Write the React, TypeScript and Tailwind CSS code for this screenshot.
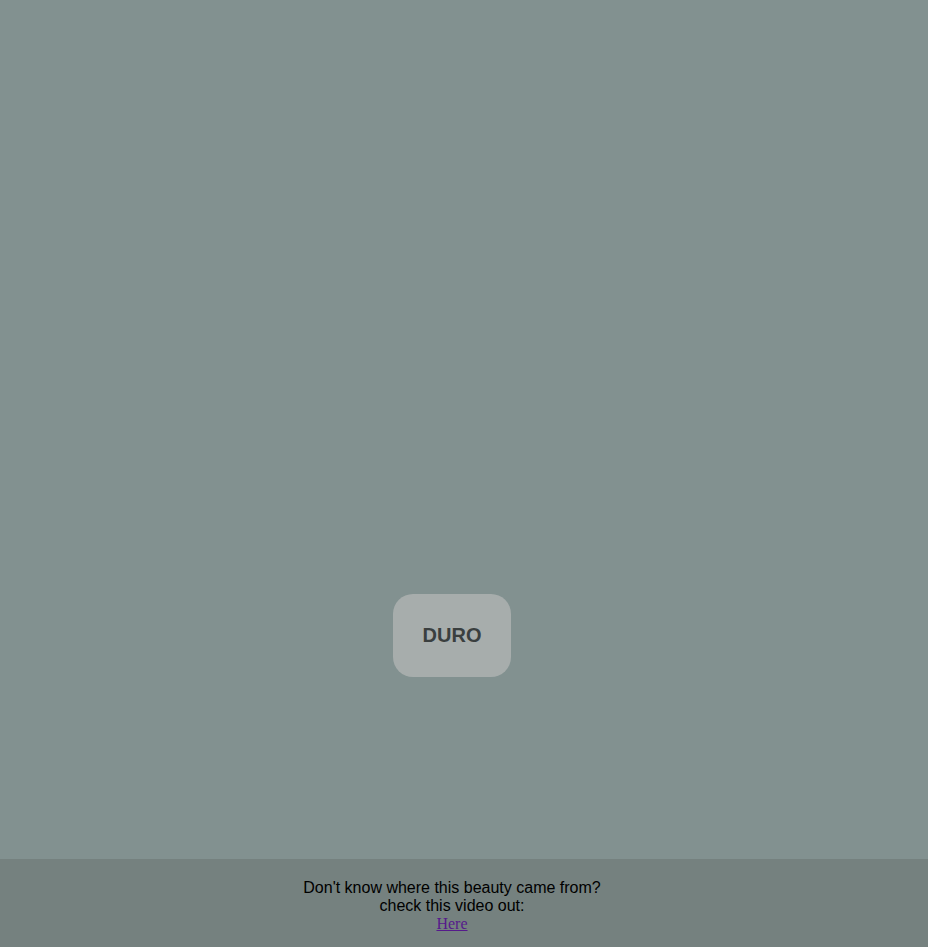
export default function App() {
  return (
    <div className="w-[928px] h-[947px] bg-[#829190] flex flex-col" style={{ fontFamily: '"Liberation Sans", Arial, sans-serif' }}>
      <main className="h-[859px] w-[904px] flex flex-col items-center pt-[594px]">
        <button className="w-[118px] h-[83px] rounded-[20px] bg-[#a7adac] text-[#3a3f3f] text-[20px] font-bold flex items-center justify-center pb-[2px]">
          DURO
        </button>
      </main>
      <footer className="h-[88px] bg-[#75817f]">
        <div className="w-[904px] pt-[20px] flex flex-col items-center text-[16px] leading-[18px] text-black">
          <span>Don't know where this beauty came from?</span>
          <span>check this video out:</span>
          <a href="#" className="text-[#551a8b] underline" style={{ fontFamily: '"Liberation Serif", "Times New Roman", serif' }}>Here</a>
        </div>
      </footer>
    </div>
  );
}
